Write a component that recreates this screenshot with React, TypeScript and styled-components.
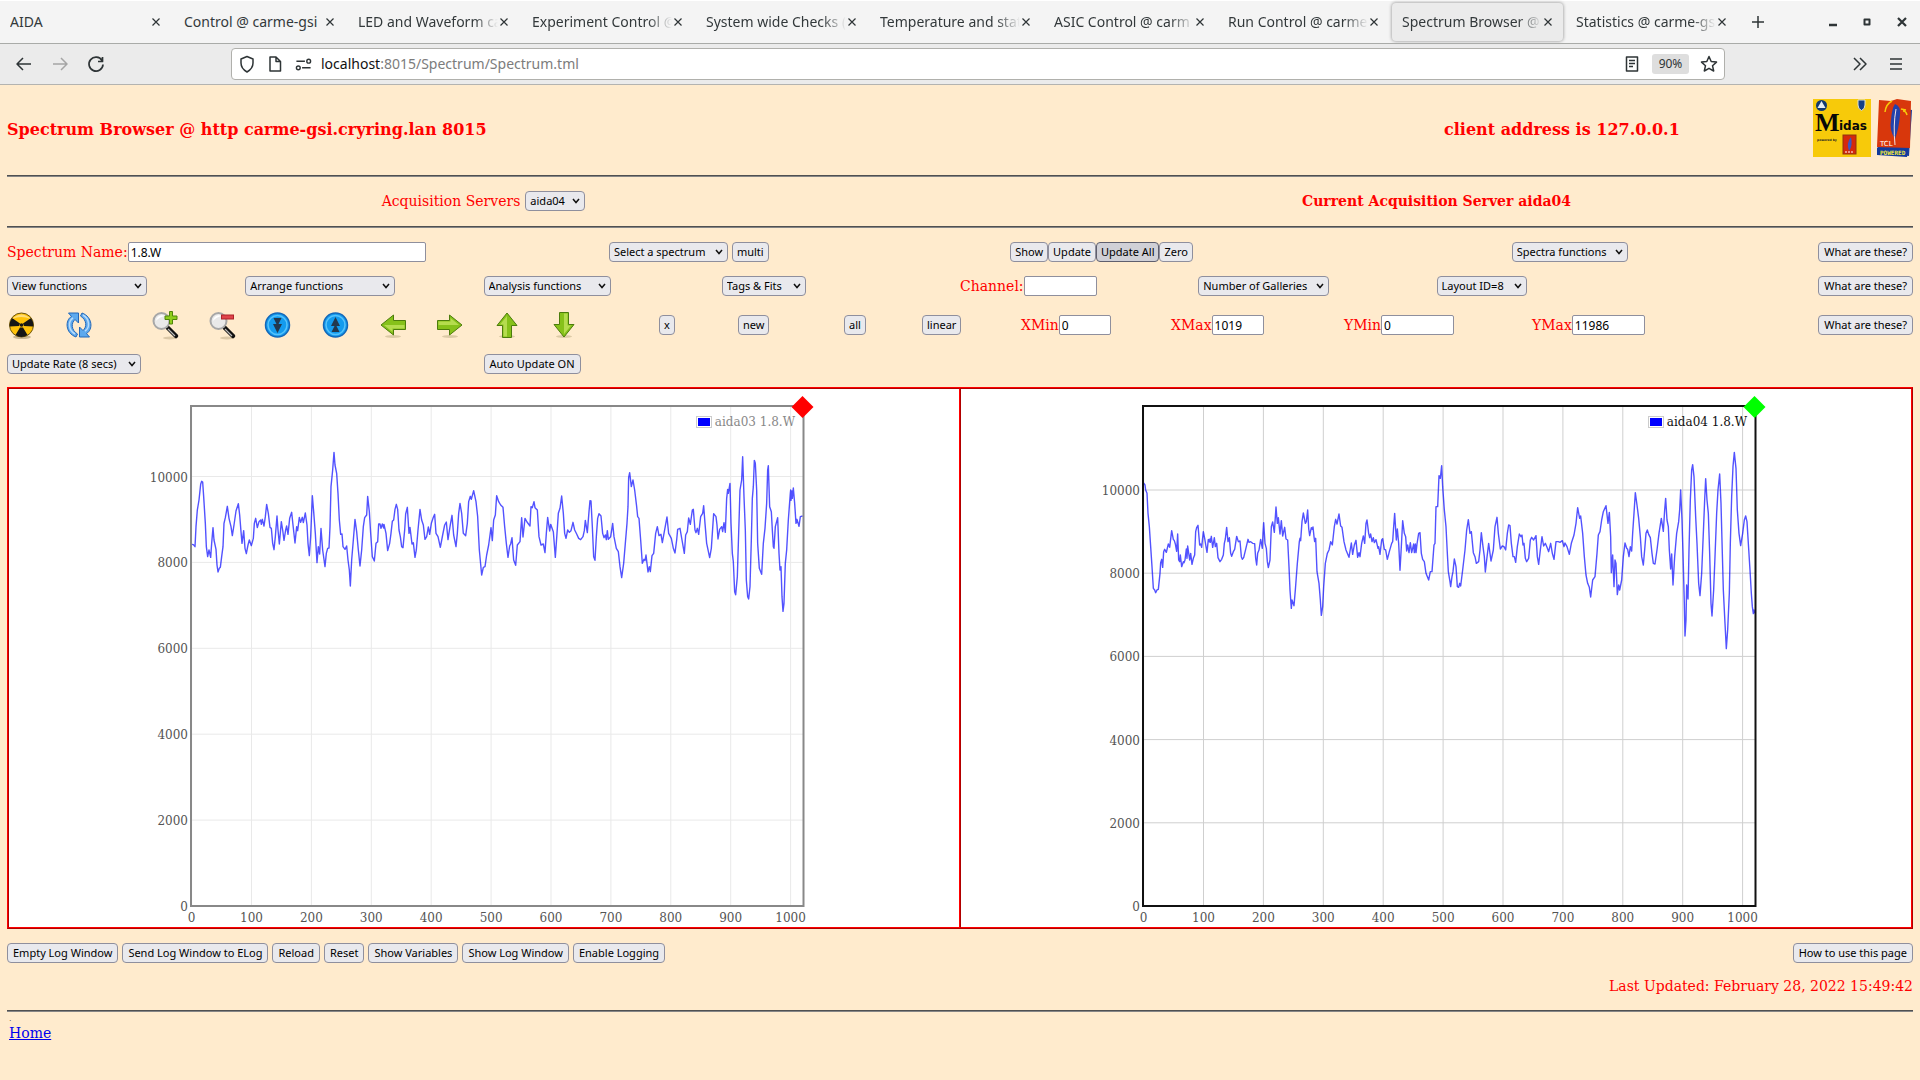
import React from "react";
import styled, { createGlobalStyle, css } from "styled-components";

const ui = `"Noto Sans", "Open Sans", sans-serif`;
const serif = `"DejaVu Serif", "Liberation Serif", serif`;

const Global = createGlobalStyle`
  * { box-sizing: border-box; }
  html, body { margin: 0; min-height: 100vh; background: #ffebcd; }
  body { font: 14px/20px ${serif}; color: #ff0000; }
  button, input, select { font-family: ${ui}; margin: 0; }
`;

/* ---------- browser window ---------- */
const TabBar = styled.nav`
  display: flex;
  align-items: center;
  height: 44px;
  gap: 3px;
  background: #f4f4f4;
  border-top: 1px solid #fff;
  border-bottom: 1px solid #a9aba8;
`;
const Tab = styled.div<{ $active?: boolean }>`
  flex: 0 1 171px;
  min-width: 0;
  height: 38px;
  display: flex;
  align-items: center;
  padding: 0 9px 0 10px;
  border-radius: 4px;
  ${(p) => p.$active && css`background: #ebebeb; box-shadow: 0 0 3px 1px #b4b4b4;`}
`;
const TabTitle = styled.span<{ $fade: boolean }>`
  flex: 1;
  min-width: 0;
  overflow: hidden;
  white-space: nowrap;
  font: 14px/20px ${ui};
  color: #33393b;
  ${(p) => p.$fade && css`mask-image: linear-gradient(to left, transparent 0, #000 24px);`}
`;
const PlainButton = styled.button<{ $w?: number }>`
  flex: none;
  display: flex;
  align-items: center;
  justify-content: center;
  width: ${(p) => p.$w ?? 36}px;
  height: 32px;
  padding: 0;
  border: 0;
  background: none;
  color: #2e3436;
  svg { flex: none; }
`;
const WindowButtons = styled.div`
  display: flex;
  margin-left: auto;
`;
const Toolbar = styled.div`
  display: flex;
  align-items: center;
  height: 41px;
  padding: 0 6px;
  background: #ebebeb;
  border-bottom: 1px solid #b3b3b0;
`;
const Address = styled.div`
  flex: 1;
  display: flex;
  align-items: center;
  height: 32px;
  margin: 0 117px;
  padding: 0 1px;
  background: #fff;
  border: 1px solid #b0b0ac;
  border-radius: 4px;
`;
const Url = styled.div`
  flex: 1;
  margin-left: 4px;
  font: 14px/22px ${ui};
  color: #7c7c7c;
  b { font-weight: 400; color: #111; }
`;
const ZoomLevel = styled.button`
  height: 20px;
  width: 37px;
  margin: 0 6px 0 2px;
  padding: 0;
  border: 0;
  border-radius: 3px;
  background: #dedede;
  color: #2e3436;
  font-size: 12px;
  line-height: 20px;
`;

/* ---------- page ---------- */
const Page = styled.main`
  padding: 0 7px;
`;
const Header = styled.header`
  display: grid;
  grid-template-columns: 1437fr 350fr 119fr;
  align-items: center;
  height: 90px;
  padding-bottom: 4px;
`;
const Title = styled.h3`
  margin: 4px 0 0;
  font: bold 16px/22px ${serif};
  white-space: nowrap;
`;
const Logos = styled.div`
  display: flex;
  justify-content: flex-end;
  gap: 5px;
`;
const Rule = styled.hr`
  height: 2px;
  margin: 0;
  border: 0;
  border-top: 1px solid #505050;
  background: #868686;
`;
const ServerRow = styled.div`
  display: grid;
  grid-template-columns: 1fr 1fr;
  height: 49px;
  padding-bottom: 2px;
  align-items: center;
  justify-items: center;
`;
const Field = styled.label<{ $gap?: number }>`
  display: flex;
  align-items: center;
  gap: ${(p) => p.$gap ?? 0}px;
  white-space: nowrap;
`;
const Controls = styled.section`
  display: grid;
  gap: 14px;
  padding: 14px 0 13px;
`;
const Row = styled.div<{ $cols: string; $h?: number; $help?: boolean }>`
  display: grid;
  grid-template-columns: ${(p) => p.$cols};
  align-items: center;
  justify-items: start;
  height: ${(p) => p.$h ?? 20}px;
  ${(p) => p.$help && css`& > :last-child { justify-self: end; }`}
`;
const Group = styled.div<{ $gap?: number }>`
  display: flex;
  gap: ${(p) => p.$gap ?? 0}px;
`;
const control = css`
  height: 20px;
  border: 1px solid #8f8f9d;
  color: #000;
  font-size: 11px;
  line-height: 16px;
`;
const Button = styled.button<{ $pressed?: boolean; $wide?: boolean }>`
  ${control}
  padding: 0 ${(p) => (p.$wide ? 5 : 4)}px;
  border-radius: 4px;
  white-space: nowrap;
  background: #e9e9ed;
  ${(p) => p.$pressed && css`background: #d0d0d7; border-color: #5f5f6e;`}
`;
const Input = styled.input<{ $w: number }>`
  ${control}
  width: ${(p) => p.$w}px;
  padding: 0 2px;
  font-size: 12px;
  border-radius: 2px;
  background: #fff;
`;
const SelectBox = styled.span<{ $w: number }>`
  display: block;
  position: relative;
  width: ${(p) => p.$w}px;
  svg { position: absolute; right: 5px; top: 7px; pointer-events: none; }
`;
const NativeSelect = styled.select`
  ${control}
  display: block;
  appearance: none;
  width: 100%;
  padding: 0 16px 0 4px;
  border-radius: 4px;
  background: #e9e9ed;
`;
const IconButton = styled.button`
  width: 30px;
  height: 30px;
  padding: 0;
  border: 0;
  background: none;
  svg { display: block; }
`;
const Gallery = styled.section`
  display: grid;
  grid-template-columns: 1fr 1fr;
  border: 1px solid;
  border-color: #ff0000 #b00000 #b00000 #ff0000;
`;
const Cell = styled.figure`
  display: flex;
  justify-content: center;
  margin: 0;
  background: #fff;
  border: 1px solid;
  border-color: #b00000 #ff0000 #ff0000 #b00000;
  svg { display: block; font: 12px ${serif}; }
`;
const Actions = styled.div`
  display: flex;
  justify-content: space-between;
  margin-top: 14px;
`;
const Updated = styled.p`
  margin: 13px 0 14px;
  text-align: right;
`;
const Footer = styled.footer`
  padding: 3px 2px;
  color: #333;
`;
const Dot = styled.div`
  font-size: 8px;
  line-height: 8px;
`;
const HomeLink = styled.a`
  color: #0000ee;
`;

function Select({ label, w, id }: { label: string; w: number; id?: string }) {
  return (
    <SelectBox $w={w}>
      <NativeSelect id={id} aria-label={label} defaultValue={label}>
        <option>{label}</option>
      </NativeSelect>
      <svg width="8" height="6" viewBox="0 0 8 6"><path d="M1 1l3 3.6L7 1" fill="none" stroke="#111" strokeWidth="1.5" /></svg>
    </SelectBox>
  );
}

/* ---------- tool icons ---------- */
const Svg = ({ children }: { children: React.ReactNode }) => (
  <svg width="30" height="30" viewBox="0 0 30 30" aria-hidden="true">{children}</svg>
);
const Nuclear = () => (
  <Svg>
    <ellipse cx="15" cy="27" rx="9" ry="2" fill="#c9b694" />
    <circle cx="14.5" cy="15" r="12" fill="#ffc20a" stroke="#6b5410" />
    <g fill="#161616">
      <path d="M13 13.5L5 8Q2.6 11 2.6 16.5l9.4-.5zM16 13.5L24 8q2.4 3 2.4 8.500L17 16zM13 17.500L8.500 25q6 3.800 12 0L16 17.500z" />
      <circle cx="14.5" cy="15" r="1.8" />
    </g>
    <path d="M5 9Q14 0 24 9Q14 5 5 9z" fill="#fff" opacity=".45" />
  </Svg>
);
const Refresh = () => (
  <Svg>
    <g fill="#5da9ee" stroke="#2568b8" strokeLinejoin="round">
      <path d="M12 27C1 23 1 10 7.500 6.500L4.500 3h10v10L11 9.500C7 13 7 20 13.500 24z" />
      <path d="M18 3c11 4 11 17 4.500 20.500l3 3.500h-10V17l3.500 3.500C23 17 23 10 16.500 6z" />
    </g>
    <path d="M11 24C4 20 4 11 9 8M19 5c7 4 7 13 2 16" fill="none" stroke="#b9dcfb" strokeWidth="1.5" />
  </Svg>
);
const Magnifier = ({ plus }: { plus?: boolean }) => (
  <Svg>
    <ellipse cx="20" cy="28" rx="7" ry="1.5" fill="#dcc8a6" />
    <path d="M18 18l8 8" stroke="#111" strokeWidth="4.5" strokeLinecap="round" />
    <path d="M18 19l7 7" stroke="#bbb" strokeWidth="1.2" />
    <circle cx="11.5" cy="11" r="8" fill="#e9e9e9" stroke="#a7a7a7" strokeWidth="2" />
    <path d="M6 11a6 6 0 0 1 9-5Q9 7 6 11z" fill="#fff" />
    {plus ? (
      <path d="M19.500 1.500h3v4.500h4.500v3.500h-4.500V14h-3V9.500H15V6h4.500z" fill="#8fce1d" stroke="#51850a" />
    ) : (
      <rect x="14.5" y="5" width="12" height="4" fill="#e0434a" stroke="#ad2229" />
    )}
  </Svg>
);
const Orb = ({ up }: { up?: boolean }) => (
  <Svg>
    <circle cx="14.5" cy="15" r="12" fill="#139bee" stroke="#1467b8" strokeWidth="1.5" />
    <circle cx="14.5" cy="15" r="9.5" fill="none" stroke="#57c2fb" strokeWidth="1.5" />
    <path
      d="M10.500 8h8l-3 6h3.500l-4.500 9-4.500-9h3.500z"
      fill="#22384e"
      transform={up ? "rotate(180 14.5 15)" : undefined}
    />
  </Svg>
);
const Arrow = ({ turn }: { turn: number }) => (
  <Svg>
    <ellipse cx="15" cy="26.5" rx="8" ry="1.5" fill="#dccaa6" />
    <g transform={`rotate(${turn} 15 15)`}>
      <path d="M2.500 10.500h12V5L27 15 14.500 25v-5.500h-12z" fill="#86c11a" stroke="#4c7c0c" strokeLinejoin="round" />
      <path d="M3.500 11.500h12V8L24 15H3.500z" fill="#b5dc4e" />
    </g>
  </Svg>
);

const MidasLogo = () => (
  <svg width="58" height="58" viewBox="0 0 58 58" role="img" aria-label="Midas">
    <rect width="58" height="58" fill="#f7ca0a" />
    <circle cx="8.5" cy="6.5" r="5.5" fill="#123a70" />
    <path d="M8.500 2l4 7h-8z" fill="#e8eef2" />
    <path d="M45 1h7v5q0 4-3.500 5.500Q45 10 45 6z" fill="#173f86" stroke="#dce3d8" />
    <text x="2" y="32" fontFamily="Liberation Serif, serif" fontWeight="bold" fontSize="26" fill="#080808">M</text>
    <text x="26" y="31" fontFamily="DejaVu Sans, sans-serif" fontWeight="bold" fontSize="12" fill="#080808">idas</text>
    <text x="4" y="42" fontFamily="DejaVu Sans, sans-serif" fontWeight="bold" fontSize="3" fill="#222">powered by</text>
    <rect x="30" y="36" width="13" height="19" fill="#d5290b" stroke="#8e3411" />
    <path d="M38 38q-5 6-2 14q4-5 2-14z" fill="#3f55bd" />
    <path d="M32 53h9" stroke="#fff" strokeDasharray="2 1" />
  </svg>
);
const TclLogo = () => (
  <svg width="37" height="58" viewBox="0 0 37 58" role="img" aria-label="TCL powered">
    <path d="M6 6l30 5-3 46-32-4z" fill="#1a3c9c" />
    <path d="M3 1l12 1 6-2 14 2-1 47-33-1z" fill="#d8370c" />
    <path d="M9 13q1-8 7-11M27 12q3 0 4 4M25 10l5 1" fill="none" stroke="#f7ca0a" strokeWidth="1.5" />
    <path d="M19 5q6 2 5 11-1 13-5 24-6-9-4-19 1-12 4-16z" fill="#2342ab" />
    <path d="M20 10q-3 16-1 36" fill="none" stroke="#f3e3e0" />
    <path d="M1 49l31 1-1 8-30-2z" fill="#103a9c" />
    <text x="4" y="47" fontFamily="DejaVu Sans, sans-serif" fontSize="7" fill="#fff">TCL</text>
    <text x="4" y="56" fontFamily="DejaVu Sans Mono, monospace" fontWeight="bold" fontSize="6" fill="#f3e83a">POWERED</text>
  </svg>
);

/* ---------- spectra ---------- */
/* Traces are sampled in thirds of a pixel; each is stored in two halves. */
const HALF = 1020;
const joinHalves = (a: string, b: string) =>
  a.trim() + " " + b.trim().split(/\s+/).map((p) => {
    const [x, y] = p.split(",").map(Number);
    return `${x + HALF},${y}`;
  }).join(" ");

const trace03 = joinHalves(
  `156,463 160,464 165,470 168,410 172,360 177,330 182,283 185,274 188,276 191,320 196,400 199,470 203,500 207,480 212,502 215,460 219,413 222,450 228,478 231,525 234,546 238,535 241,532 245,500 249,470 252,400 256,383 262,349 267,385 273,410 277,437 282,405 288,363 295,341 299,375 303,425 306,460 311,422 315,475 319,491 324,465 328,450 334,467 340,445 343,400 347,385 352,413 357,395 362,390 364,403 367,388 372,408 376,380 380,343 385,370 390,412 394,415 398,460 402,479 406,440 411,378 414,420 418,462 424,395 428,420 432,451 437,420 440,408 444,433 449,385 455,367 459,405 465,459 470,410 473,422 478,382 482,397 487,382 490,398 496,369 501,405 504,460 508,497 512,440 517,317 521,365 526,430 531,518 535,470 539,492 543,415 548,480 555,530 559,490 563,475 567,474 570,410 573,290 578,240 582,187 585,225 590,250 594,310 598,390 602,433 606,432 609,470 615,478 620,468 624,510 628,540 631,588 635,510 640,450 645,388 650,425 655,480 660,528 665,480 670,410 674,383 680,375 683,319 688,365 692,430 697,500 703,513 708,460 713,455 716,402 720,402 723,415 727,402 731,414 732,403 738,430 743,482 749,460 753,430 757,394 761,390 765,358 769,343 773,358 777,420 781,440 785,470 789,473 794,420 797,372 802,352 807,430 810,412 816,462 820,458 825,502 829,480 834,420 840,358 845,390 850,405 855,448 860,440 865,411 869,433 874,400 880,382 884,373 888,430 894,440 901,472 908,435 914,405 919,396 924,449 930,410 936,376 941,435 948,470 952,430 956,370 960,340 965,370 970,430 977,437 982,400 986,335 991,319 994,328 1001,302 1008,335 1013,380 1018,480`,
  `5,555 10,532 15,530 20,495 26,465 33,413 37,452 41,390 46,375 50,317 56,335 62,345 69,352 74,410 79,460 84,502 89,468 92,462 96,443 101,510 107,526 112,465 120,455 125,383 129,441 135,385 141,396 150,408 153,350 157,353 162,335 165,353 172,360 177,440 183,465 190,462 195,488 199,430 203,382 209,423 212,403 220,425 226,502 231,430 235,370 240,355 245,318 250,370 254,430 258,445 263,420 268,427 273,422 279,397 284,420 290,432 296,445 302,449 309,440 313,422 316,391 322,428 327,365 330,332 333,333 337,410 341,500 345,511 349,440 353,385 357,371 363,378 368,430 372,443 376,435 379,449 382,422 385,448 392,440 398,400 402,440 409,475 415,485 420,530 425,563 431,520 436,460 441,400 444,350 446,262 449,248 454,290 459,270 464,300 470,350 473,380 477,385 482,450 487,520 492,508 495,512 498,495 504,546 508,530 511,545 516,497 521,490 527,430 532,410 537,437 543,433 547,458 553,425 561,381 566,430 574,445 580,475 585,489 590,450 593,418 600,415 606,450 613,490 617,435 622,425 626,384 631,403 637,360 640,358 645,420 648,428 652,415 656,433 662,380 668,370 671,347 675,400 680,460 689,503 694,475 699,400 701,371 708,380 711,405 714,447 719,418 725,410 728,425 732,398 736,427 740,325 743,298 745,310 750,280 753,400 757,490 760,515 764,605 767,614 772,560 776,430 780,300 785,270 788,200 792,320 796,420 799,570 803,620 806,627 810,590 814,450 817,325 820,290 823,211 826,220 830,300 833,460 838,535 845,553 850,460 855,415 860,340 863,240 865,227 869,350 874,365 877,420 880,470 882,475 886,410 893,383 897,490 900,540 903,530 906,620 909,664 912,640 916,520 920,480 925,390 931,310 932,300 933,331 936,303 937,325 940,294 944,340 948,400 951,388 957,409 961,380 968,378`
);
const trace04 = joinHalves(
  `160,278 165,285 167,300 171,310 174,370 178,410 182,470 186,530 190,595 194,600 197,608 201,600 205,598 210,550 212,518 215,508 218,532 221,485 224,478 229,487 235,462 239,472 245,422 250,448 253,452 256,462 260,484 263,432 266,510 269,515 271,495 275,530 280,515 282,518 285,510 289,477 291,505 293,468 299,510 302,490 306,523 310,505 314,495 317,425 320,413 324,406 329,465 332,462 335,472 340,425 344,445 348,470 351,487 355,448 358,455 360,447 361,457 364,439 368,472 373,443 376,470 380,460 384,503 390,515 395,508 400,495 403,460 406,447 410,412 414,455 418,443 422,490 425,499 430,485 434,478 440,439 445,455 450,453 454,500 457,508 461,503 467,478 474,448 477,457 482,455 488,460 494,461 497,505 500,525 503,490 507,480 512,448 517,475 519,430 521,398 525,460 529,475 532,515 535,533 540,510 544,410 548,396 553,427 558,351 562,400 565,383 570,432 574,392 578,438 584,412 588,447 593,450 597,530 600,600 604,655 606,630 612,647 616,600 622,520 628,455 630,445 632,452 636,395 640,369 646,400 649,395 653,360 656,415 659,437 664,413 667,418 669,411 672,440 674,455 677,445 681,545 687,580 691,630 694,676 698,650 701,590 706,520 712,490 717,480 722,455 727,465 733,410 737,388 741,402 747,372 752,408 756,412 762,455 768,480 777,502 784,459 788,493 793,465 798,451 803,502 807,488 810,500 815,460 820,438 824,460 828,400 831,390 836,430 839,443 842,432 846,455 850,443 853,458 858,449 864,475 866,470 870,493 875,450 878,446 883,478 887,480 892,508 898,485 905,460 908,455 911,410 914,370 919,450 922,417 926,460 930,541 934,470 938,392 943,430 947,440 950,483 953,465 957,488 961,458 965,488 971,462 973,488 976,462 978,488 981,462 986,430 990,428 994,490 998,508 1003,515 1008,550 1016,570 1021,545`,
  `6,545 12,465 15,460 18,350 23,350 27,257 31,265 35,227 38,290 43,360 48,410 52,490 55,545 60,575 62,590 66,560 69,545 73,507 78,530 82,590 86,592 89,580 92,588 98,540 105,480 110,420 115,389 120,430 124,425 130,488 135,500 139,520 146,515 150,480 154,428 159,470 163,500 166,546 170,510 176,460 183,513 190,480 195,410 201,382 205,430 211,477 217,468 222,470 227,480 232,430 236,405 240,407 244,460 249,500 253,500 257,517 262,470 268,432 273,440 276,435 279,465 282,460 286,505 290,515 296,505 301,450 305,442 311,450 318,437 322,500 326,523 331,480 336,440 341,468 346,460 351,472 356,485 362,460 367,490 372,508 378,455 385,455 390,457 397,452 402,470 405,459 411,470 418,493 424,460 432,435 438,400 443,353 449,385 452,378 458,430 463,500 468,555 473,580 478,592 482,621 488,570 495,560 501,490 505,435 510,425 515,390 520,365 528,347 534,400 538,367 542,440 544,548 548,495 552,590 555,510 558,520 562,614 566,585 569,600 575,570 580,500 585,459 590,475 593,478 597,500 601,470 605,483 608,430 612,370 616,308 621,345 626,385 631,440 635,500 640,525 644,480 648,430 652,420 656,433 661,443 666,490 670,520 675,522 681,480 687,430 694,385 700,424 704,360 707,325 711,390 715,410 718,480 722,537 725,492 729,585 734,500 740,430 746,395 749,360 752,300 756,390 759,490 763,640 765,738 768,690 770,585 774,627 777,480 781,330 785,240 788,224 792,260 797,380 801,460 806,580 810,617 815,550 820,430 824,330 827,266 831,330 835,370 839,490 843,640 846,678 851,600 855,500 860,370 864,300 869,252 873,340 877,490 880,600 885,700 889,776 893,720 898,610 901,460 905,320 909,230 913,187 918,235 922,360 927,430 932,467 938,430 943,390 947,378 951,395 955,460 960,540 964,610 967,650 970,671 972,660 975,670`
);

interface SpectrumProps {
  name: string;
  points: string;
  shiftX: number;
  perThousand: number;
  frame: string;
  grid: string;
  text: string;
  marker: string;
}
function Spectrum({ name, points, shiftX, perThousand, frame, grid, text, marker }: SpectrumProps) {
  const channels = Array.from({ length: 11 }, (_, i) => i * 100);
  const counts = [0, 2000, 4000, 6000, 8000, 10000];
  const px = (c: number) => 40.6 + c * 0.599;
  const py = (n: number) => 517 - (n / 1000) * perThousand;
  return (
    <Cell>
      <svg width="666" height="538" viewBox="0 0 666 538" role="img" aria-label={name}>
        <g stroke={grid}>
          {channels.map((c) => <line key={c} x1={px(c)} x2={px(c)} y1="18" y2="516" />)}
          {counts.map((n) => <line key={n} x1="41" x2="652" y1={py(n)} y2={py(n)} />)}
        </g>
        <g fill="#545454">
          {channels.map((c) => <text key={c} x={px(c)} y="533" textAnchor="middle">{c}</text>)}
          {counts.map((n) => <text key={n} x="37" y={py(n) + 5} textAnchor="end">{n}</text>)}
        </g>
        <polyline
          points={points}
          transform={`translate(${shiftX} 1) scale(0.33333)`}
          fill="none"
          stroke="#0000ff"
          strokeOpacity="0.68"
          strokeWidth="1.4"
          strokeLinejoin="round"
          vectorEffect="non-scaling-stroke"
        />
        <rect x="40" y="17" width="612.5" height="500" fill="none" stroke={frame} strokeWidth="2" />
        <rect x="545.5" y="27.5" width="15" height="11" fill="#fff" stroke="#ccc" />
        <rect x="547" y="29" width="12" height="8" fill="#0000ff" />
        <text x="644" y="37" textAnchor="end" fill={text}>{name}</text>
        <path d="M651.500 7l11 11-11 11-11-11z" fill={marker} />
      </svg>
    </Cell>
  );
}

/* ---------- data ---------- */
const tabs = [
  "AIDA", "Control @ carme-gsi", "LED and Waveform ca", "Experiment Control @", "System wide Checks (",
  "Temperature and stat", "ASIC Control @ carm", "Run Control @ carme", "Spectrum Browser @", "Statistics @ carme-gs",
];
const eight = "repeat(8, minmax(0, 1fr))";
const toolGrid =
  "57fr 86fr 57fr 56fr 58fr 57fr 57fr 57fr 57fr 110fr 79fr 106fr 78fr 99fr 150fr 173fr 188fr 286fr minmax(0, 95fr)";
const tools: [string, React.ReactNode][] = [
  ["Clear", <Nuclear />], ["Refresh", <Refresh />], ["Zoom in", <Magnifier plus />], ["Zoom out", <Magnifier />],
  ["Compress", <Orb />], ["Expand", <Orb up />], ["Left", <Arrow turn={180} />], ["Right", <Arrow turn={0} />],
  ["Up", <Arrow turn={-90} />], ["Down", <Arrow turn={90} />],
];
const limits: [string, string, number][] = [["XMin", "0", 52], ["XMax", "1019", 52], ["YMin", "0", 73], ["YMax", "11986", 73]];
const logActions = ["Empty Log Window", "Send Log Window to ELog", "Reload", "Reset", "Show Variables", "Show Log Window", "Enable Logging"];

interface StrokeProps { d: string; w?: number; width?: number; color?: string }
const Stroke = ({ d, w = 18, width = 1.5, color = "#2e3436" }: StrokeProps) => (
  <svg width={w} height={w} viewBox="0 0 18 18" aria-hidden="true">
    <path d={d} fill="none" stroke={color} strokeWidth={width} strokeLinejoin="round" />
  </svg>
);

export default function App() {
  return (
    <>
      <Global />
      <TabBar>
        {tabs.map((t, i) => (
          <Tab key={t} $active={i === 8}>
            <TabTitle $fade={i > 1}>{t}</TabTitle>
            <PlainButton $w={12} aria-label={`Close ${t}`}><Stroke d="M5.500 5.500l7 7M12.500 5.500l-7 7" width={1.2} /></PlainButton>
          </Tab>
        ))}
        <PlainButton aria-label="New tab"><Stroke d="M9 3v12M3 9h12" /></PlainButton>
        <WindowButtons>
          <PlainButton $w={34} aria-label="Minimize"><Stroke d="M5 12h8" width={2.5} /></PlainButton>
          <PlainButton $w={34} aria-label="Maximize"><Stroke d="M6.500 6.500h5v5h-5z" width={2} /></PlainButton>
          <PlainButton $w={36} aria-label="Close window"><Stroke d="M5 5l8 8M13 5l-8 8" width={2.2} /></PlainButton>
        </WindowButtons>
      </TabBar>
      <Toolbar>
        <PlainButton aria-label="Back"><Stroke d="M16 9H2M8 3L2 9l6 6" /></PlainButton>
        <PlainButton aria-label="Forward"><Stroke d="M2 9h14M10 3l6 6-6 6" color="#a5a5a5" /></PlainButton>
        <PlainButton aria-label="Reload page"><Stroke d="M15 5.500A7 7 0 1 0 16 9.500M15.500 2v4.500H11" width={1.7} /></PlainButton>
        <Address>
          <PlainButton $w={28} aria-label="Tracking protection"><Stroke d="M9 1.500l6 2.500v4q0 5.500-6 9-6-3.500-6-9V4z" /></PlainButton>
          <PlainButton $w={28} aria-label="Site information"><Stroke d="M4 2h6l4.500 4.500V16H4zM10 2v4.500h4.500" /></PlainButton>
          <PlainButton $w={28} aria-label="Permissions"><Stroke d="M1.500 5.500h9M16.500 5.500a2 2 0 1 0-4 0 2 2 0 1 0 4 0M7.500 12.500h9M5.500 12.500a2 2 0 1 0-4 0 2 2 0 1 0 4 0" w={17} /></PlainButton>
          <Url><b>localhost</b>:8015/Spectrum/Spectrum.tml</Url>
          <PlainButton aria-label="Reader view"><Stroke d="M3.500 2h11v14h-11zM6 5.500h6M6 8.500h6M6 11.500h4" /></PlainButton>
          <ZoomLevel>90%</ZoomLevel>
          <PlainButton $w={28} aria-label="Bookmark"><Stroke d="M9 1.500l2.200 5 5.300.6-4 3.600 1.200 5.300L9 13.300 4.300 16l1.200-5.300-4-3.600 5.300-.6z" /></PlainButton>
        </Address>
        <PlainButton aria-label="More tools"><Stroke d="M3 3l6 6-6 6M9 3l6 6-6 6" /></PlainButton>
        <PlainButton aria-label="Menu"><Stroke d="M3 4h12M3 9h12M3 14h12" /></PlainButton>
      </Toolbar>

      <Page>
        <Header>
          <Title>Spectrum Browser @ http carme-gsi.cryring.lan 8015</Title>
          <Title>client address is 127.0.0.1</Title>
          <Logos><MidasLogo /><TclLogo /></Logos>
        </Header>
        <Rule />
        <ServerRow>
          <Field $gap={5} htmlFor="server">Acquisition Servers <Select id="server" label="aida04" w={60} /></Field>
          <b>Current Acquisition Server aida04</b>
        </ServerRow>
        <Rule />
        <Controls>
          <Row $cols="6fr 4fr 5fr 3fr 1fr" $help>
            <Field>Spectrum Name:<Input $w={298} defaultValue="1.8.W" /></Field>
            <Group $gap={4}><Select label="Select a spectrum" w={119} /><Button>multi</Button></Group>
            <Group>
              <Button>Show</Button><Button>Update</Button><Button $pressed>Update All</Button><Button>Zero</Button>
            </Group>
            <Select label="Spectra functions" w={116} />
            <Button $wide>What are these?</Button>
          </Row>
          <Row $cols={eight} $help>
            <Select label="View functions" w={140} />
            <Select label="Arrange functions" w={150} />
            <Select label="Analysis functions" w={127} />
            <Select label="Tags & Fits" w={84} />
            <Field>Channel:<Input $w={73} /></Field>
            <Select label="Number of Galleries" w={131} />
            <Select label="Layout ID=8" w={90} />
            <Button $wide>What are these?</Button>
          </Row>
          <Row $cols={toolGrid} $h={30} $help>
            {tools.map(([name, icon]) => <IconButton key={name} aria-label={name}>{icon}</IconButton>)}
            <Button>x</Button>
            <Button>new</Button>
            <Button>all</Button>
            <Button>linear</Button>
            {limits.map(([name, value, w]) => (
              <Field key={name}>{name}<Input $w={w} defaultValue={value} /></Field>
            ))}
            <Button $wide>What are these?</Button>
          </Row>
          <Row $cols="1fr 3fr">
            <Select label="Update Rate (8 secs)" w={134} />
            <Button $wide>Auto Update ON</Button>
          </Row>
        </Controls>
        <Gallery>
          <Spectrum name="aida03 1.8.W" points={trace03} shiftX={-11} perThousand={42.95} frame="#888" grid="#e9e9e9" text="#888" marker="#ff0000" />
          <Spectrum name="aida04 1.8.W" points={trace04} shiftX={-13} perThousand={41.6} frame="#111" grid="#cfcfcf" text="#111" marker="#00ff00" />
        </Gallery>
        <Actions>
          <Group $gap={4}>{logActions.map((a) => <Button $wide key={a}>{a}</Button>)}</Group>
          <Button $wide>How to use this page</Button>
        </Actions>
        <Updated>Last Updated: February 28, 2022 15:49:42</Updated>
        <Rule />
        <Footer>
          <Dot>.</Dot>
          <HomeLink href="#home">Home</HomeLink>
        </Footer>
      </Page>
    </>
  );
}
